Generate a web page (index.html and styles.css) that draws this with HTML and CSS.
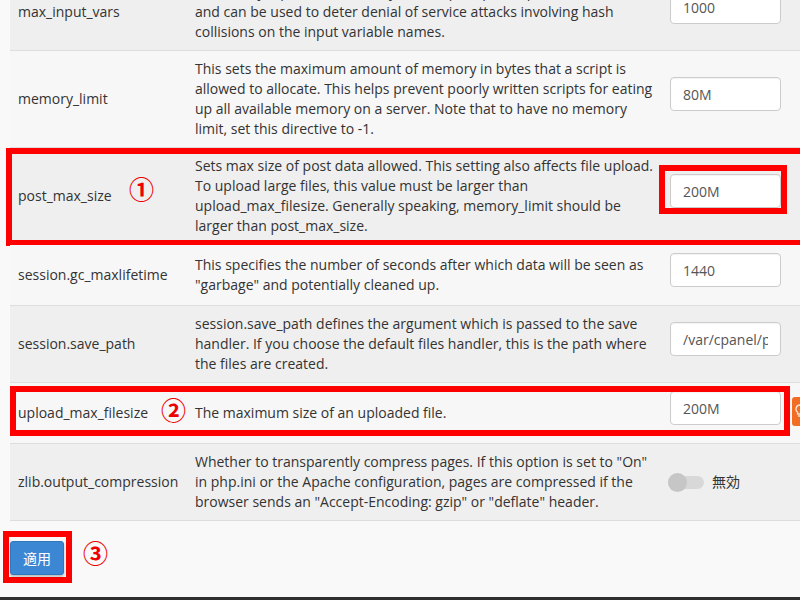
FILE: index.html
```html
<!DOCTYPE html>
<html>
<head>
    <title>MultiPHP INI Editor</title>
    <link rel="stylesheet" href="styles.css">
</head>
<body>
    <div class="page">
        <div class="ini-table">
            <div class="ini-row odd">
                <div class="ini-name">max_input_vars</div>
                <div class="ini-desc">How many input variables may be accepted per request. This limit<br>and can be used to deter denial of service attacks involving hash collisions on the input variable names.</div>
                <div class="ini-value"><input class="ini-input" type="text" value="1000"></div>
            </div>
            <div class="ini-row">
                <div class="ini-name">memory_limit</div>
                <div class="ini-desc">This sets the maximum amount of memory in bytes that a script is allowed to allocate. This helps prevent poorly written scripts for eating up all available memory on a server. Note that to have no memory limit, set this directive to -1.</div>
                <div class="ini-value"><input class="ini-input" type="text" value="80M"></div>
            </div>
            <div class="ini-row odd">
                <div class="ini-name">post_max_size</div>
                <div class="ini-desc">Sets max size of post data allowed. This setting also affects file upload. To upload large files, this value must be larger than upload_max_filesize. Generally speaking, memory_limit should be larger than post_max_size.</div>
                <div class="ini-value">
                    <input class="ini-input" type="text" value="200M">
                    <div class="mark mark-input"></div>
                </div>
                <div class="mark mark-row-1"></div>
                <span class="step step-1">①</span>
            </div>
            <div class="ini-row">
                <div class="ini-name">session.gc_maxlifetime</div>
                <div class="ini-desc">This specifies the number of seconds after which data will be seen as "garbage" and potentially cleaned up.</div>
                <div class="ini-value"><input class="ini-input" type="text" value="1440"></div>
            </div>
            <div class="ini-row odd">
                <div class="ini-name">session.save_path</div>
                <div class="ini-desc">session.save_path defines the argument which is passed to the save handler. If you choose the default files handler, this is the path where the files are created.</div>
                <div class="ini-value"><input class="ini-input" type="text" value="/var/cpanel/php/sessions/ea-php74"></div>
            </div>
            <div class="ini-row">
                <div class="ini-name">upload_max_filesize</div>
                <div class="ini-desc">The maximum size of an uploaded file.</div>
                <div class="ini-value"><input class="ini-input" type="text" value="200M"></div>
                <div class="mark mark-row-2"></div>
                <span class="step step-2">②</span>
            </div>
            <div class="ini-row odd">
                <div class="ini-name">zlib.output_compression</div>
                <div class="ini-desc">Whether to transparently compress pages. If this option is set to "On" in php.ini or the Apache configuration, pages are compressed if the browser sends an "Accept-Encoding: gzip" or "deflate" header.</div>
                <div class="ini-value toggle-cell">
                    <span class="toggle"><span class="toggle-knob"></span></span>
                    <span class="toggle-label">無効</span>
                </div>
            </div>
        </div>

        <div class="actions">
            <div class="apply-wrap">
                <button class="apply-button">適用</button>
            </div>
            <span class="step step-3">③</span>
        </div>
    </div>
    <div class="side-tab">
        <svg width="12" height="14" viewBox="0 0 12 14">
            <path d="M6 1a4 4 0 0 0-2.4 7.2V10h4.8V8.2A4 4 0 0 0 6 1z" fill="none" stroke="#fde3d2" stroke-width="1.4"/>
            <path d="M4 12h4" stroke="#fde3d2" stroke-width="1.4"/>
        </svg>
    </div>
    <div class="footer"></div>
</body>
</html>
```
FILE: styles.css
```css
body {
    margin: 0;
    font-family: "Open Sans", "Noto Sans CJK JP", sans-serif;
    font-size: 14px;
    line-height: 20px;
    color: #333;
    background-color: #f9f9f9;
    overflow: hidden;
    height: 600px;
    position: relative;
}

.page {
    padding-left: 10px;
    width: 820px;
}

.ini-table {
    margin-top: -26px;
}

.ini-row {
    display: grid;
    grid-template-columns: 177px 475px 1fr;
    align-items: center;
    background-color: #f7f7f7;
    border-bottom: 1px solid #dddddd;
    position: relative;
}

.ini-row.odd {
    background-color: #efefef;
}

.ini-name,
.ini-desc,
.ini-value {
    padding: 8px;
}

.ini-value {
    position: relative;
}

.ini-input {
    display: block;
    box-sizing: border-box;
    width: 111px;
    height: 34px;
    margin: 0 0 10px 0;
    padding: 6px 12px;
    border: 1px solid #cccccc;
    border-radius: 4px;
    background-color: #fff;
    font-family: "Open Sans", sans-serif;
    font-size: 14px;
    color: #555;
    box-shadow: inset 0 1px 1px rgba(0, 0, 0, 0.05);
}

.toggle-cell {
    display: flex;
    align-items: center;
    padding-left: 6px;
}

.toggle {
    position: relative;
    width: 36px;
    height: 13px;
    border-radius: 7px;
    background-color: #d8d8d8;
}

.toggle-knob {
    position: absolute;
    left: 0;
    top: -3px;
    width: 19px;
    height: 19px;
    border-radius: 50%;
    background-color: #c6c6c6;
}

.toggle-label {
    margin-left: 8px;
}

/* red annotation boxes */
.mark {
    position: absolute;
    border: 6px solid #ff0000;
    box-sizing: border-box;
    pointer-events: none;
}

.mark-row-1 {
    left: -4px;
    top: 0;
    width: 830px;
    height: 98px;
}

.mark-input {
    left: -3px;
    top: -1px;
    width: 128px;
    height: 49px;
}

.mark-row-2 {
    left: 0;
    top: 3px;
    width: 780px;
    height: 50px;
}

.step {
    position: absolute;
    color: #ee0000;
    font-family: "Noto Sans CJK JP", sans-serif;
    font-weight: bold;
    font-size: 25px;
    line-height: 25px;
}

.step-1 {
    left: 119px;
    top: 28px;
}

.step-2 {
    left: 151px;
    top: 14px;
}

.actions {
    display: flex;
    align-items: flex-start;
    margin-top: 10px;
    margin-left: -7px;
}

.apply-wrap {
    border: 6px solid #ff0000;
    padding: 4px 2px 2px 1px;
}

.apply-button {
    display: block;
    padding: 6px 12px;
    border: 1px solid #2e78be;
    border-radius: 3px;
    background-color: #3b87d3;
    color: #fff;
    font-family: "Noto Sans CJK JP", sans-serif;
    font-size: 14px;
    line-height: 20px;
    box-shadow: 0 2px 3px rgba(0, 0, 0, 0.25);
}

.actions .step {
    position: static;
    margin-left: 11px;
    margin-top: 9px;
}

.side-tab {
    position: absolute;
    left: 792px;
    top: 397px;
    width: 20px;
    height: 29px;
    border-radius: 3px;
    background-color: #f26c24;
    padding: 7px 0 0 2px;
    box-sizing: border-box;
}

.side-tab svg {
    display: block;
}

.footer {
    position: absolute;
    left: 0;
    right: 0;
    bottom: 0;
    height: 3px;
    background-color: #2f2f2f;
}
```
